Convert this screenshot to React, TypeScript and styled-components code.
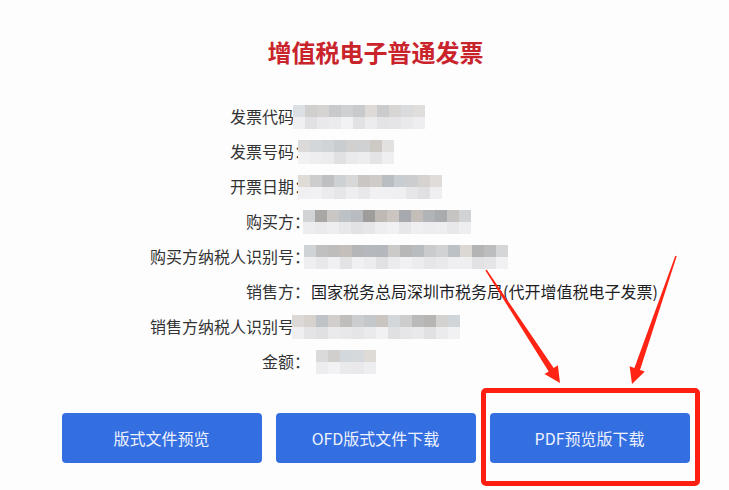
import React from 'react'
import styled, { createGlobalStyle } from 'styled-components'

const GlobalStyle = createGlobalStyle`
  html, body {
    margin: 0;
    padding: 0;
    background: #fdfdfe;
  }
  * { box-sizing: border-box; }
`

interface rowInterface {
    label: string
    text?: string
    offset: number
    cols?: number
    dark?: number
    seed?: number
}

const rows: rowInterface[] = [
    { label: '发票代码：', offset: -17, cols: 11, dark: 0.35, seed: 3 },
    { label: '发票号码：', offset: -12, cols: 8, dark: 0.4, seed: 11 },
    { label: '开票日期：', offset: -12, cols: 12, dark: 0.5, seed: 7 },
    { label: '购买方：', offset: -7, cols: 14, dark: 0.9, seed: 19 },
    { label: '购买方纳税人识别号：', offset: -6, cols: 17, dark: 0.65, seed: 23 },
    { label: '销售方：', text: '国家税务总局深圳市税务局(代开增值税电子发票)', offset: 1 },
    { label: '销售方纳税人识别号：', offset: -18, cols: 14, dark: 0.6, seed: 31 },
    { label: '金额：', offset: 6, cols: 5, dark: 0.4, seed: 5 },
]

// pseudo random grey tones for the blurred blocks
const makeCells = (seed: number, cols: number, dark: number) => {
    let s = seed * 9301 + 49297
    const rnd = () => {
        s = (s * 9301 + 49297) % 233280
        return s / 233280
    }
    const top: string[] = []
    const bottom: string[] = []
    for (let i = 0; i < cols; i++) {
        const edge = i === 0 || i === cols - 1 ? 0.35 : 1
        const base = 228 - (60 * dark * rnd() + 20 * dark) * edge
        const tint = Math.round((rnd() - 0.5) * 10)
        const g = Math.round(base)
        top.push(`rgb(${g - tint},${g},${g + tint})`)
        const lb = Math.round(242 - 18 * rnd() * edge)
        bottom.push(`rgb(${lb},${lb},${lb + 2})`)
    }
    return { top, bottom }
}

const Mosaic = ({ seed, cols, dark, offset }: { seed: number; cols: number; dark: number; offset: number }) => {
    const { top, bottom } = makeCells(seed, cols, dark)
    return (
        <MosaicBox $offset={offset}>
            <MosaicLine>
                {top.map((c, i) => <Cell key={i} style={{ background: c }} />)}
            </MosaicLine>
            <MosaicLine>
                {bottom.map((c, i) => <Cell key={i} style={{ background: c }} />)}
            </MosaicLine>
        </MosaicBox>
    )
}

const Arrows = () => (
    <ArrowLayer width="729" height="490" viewBox="0 0 729 490">
        <polygon
            fill="#ff2414"
            points="486.6,269.6 553.7,368 557.9,365.3 560,383 544.5,374.1 548.7,371.4 485.4,270.4"
        />
        <polygon
            fill="#ff2414"
            points="676.7,256.2 640,369.9 644.8,371.5 632,384 629.6,366.3 634.4,367.9 675.3,255.8"
        />
    </ArrowLayer>
)

const App = () => {
    return (
        <Page>
            <GlobalStyle />
            <Title>增值税电子普通发票</Title>
            <InfoList>
                {rows.map((r, i) => (
                    <Row key={i}>
                        <Label>{r.label}</Label>
                        {r.text ? (
                            <ValueText $offset={r.offset}>{r.text}</ValueText>
                        ) : (
                            <Mosaic seed={r.seed ?? 1} cols={r.cols ?? 8} dark={r.dark ?? 0.5} offset={r.offset} />
                        )}
                    </Row>
                ))}
            </InfoList>
            <ButtonRow>
                <Button>版式文件预览</Button>
                <Button>OFD版式文件下载</Button>
                <Highlight>
                    <Button>PDF预览版下载</Button>
                </Highlight>
            </ButtonRow>
            <Arrows />
        </Page>
    )
}

export default App

const Page = styled.div`
position: relative;
width: 729px;
height: 490px;
padding: 36px 0 0 22px;
font-family: "Noto Sans CJK SC", "Noto Sans", sans-serif;
color: #333;
overflow: hidden;
`

const Title = styled.h1`
margin: 0;
font-size: 24px;
line-height: 32px;
font-weight: 700;
color: #c9232b;
text-align: center;
`

const InfoList = styled.div`
margin-top: 30px;
display: flex;
flex-direction: column;
`

const Row = styled.div`
display: grid;
grid-template-columns: 288px 1fr;
align-items: center;
height: 35px;
font-size: 16px;
`

const Label = styled.span`
text-align: right;
white-space: nowrap;
color: #333;
`

const ValueText = styled.span<{ $offset: number }>`
margin-left: ${p => p.$offset}px;
white-space: nowrap;
color: #1e1e1e;
`

const MosaicBox = styled.div<{ $offset: number }>`
position: relative;
margin-left: ${p => p.$offset}px;
display: flex;
flex-direction: column;
width: max-content;
margin-top: 3px;
`

const MosaicLine = styled.div`
display: flex;
`

const Cell = styled.div`
width: 12px;
height: 12px;
`

const ButtonRow = styled.div`
margin-top: 35px;
display: flex;
justify-content: center;
gap: 14px;
`

const Button = styled.button`
width: 200px;
height: 50px;
border: none;
border-radius: 4px;
background: #336fe0;
color: #eef2ff;
font-family: "Noto Sans CJK SC", "Noto Sans", sans-serif;
font-size: 16px;
cursor: pointer;
`

const Highlight = styled.div`
position: relative;
&::after {
  content: '';
  position: absolute;
  top: -25px;
  right: -10px;
  bottom: -23px;
  left: -9px;
  border: 5px solid #ff1f12;
  border-radius: 5px;
  pointer-events: none;
}
`

const ArrowLayer = styled.svg`
position: absolute;
top: 0;
left: 0;
pointer-events: none;
`
